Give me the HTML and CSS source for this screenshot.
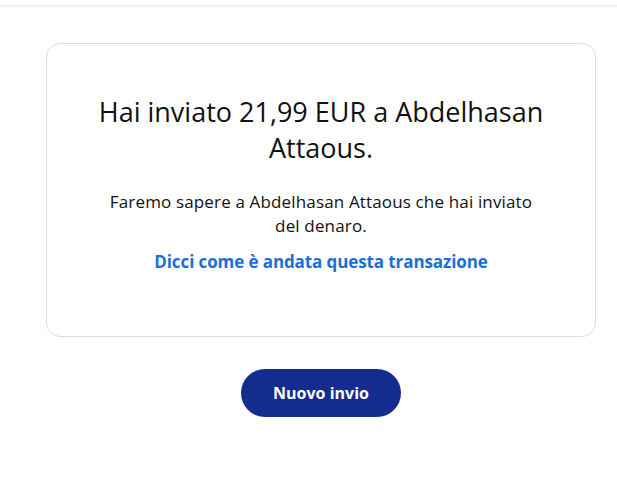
FILE: index.html
```html
<!DOCTYPE html>
<html lang="it">
<head>
<meta charset="utf-8">
<link rel="stylesheet" href="styles.css">
</head>
<body>
<div class="topbar"></div>
<main class="page">
  <section class="card">
    <h1 class="title">Hai inviato 21,99 EUR a Abdelhasan Attaous.</h1>
    <p class="info">Faremo sapere a Abdelhasan Attaous che hai inviato del denaro.</p>
    <a class="feedback" href="#">Dicci come è andata questa transazione</a>
  </section>
  <div class="actions">
    <button class="btn">Nuovo invio</button>
  </div>
</main>
</body>
</html>
```
FILE: styles.css
```css
* { box-sizing: border-box; }
html, body { margin: 0; background: #fff; }
body { font-family: "Open Sans", "Noto Sans", sans-serif; color: #111; }
.topbar {
  height: 6px;
  border-bottom: 1px solid #ececec;
  box-shadow: 0 1px 4px rgba(0,0,0,0.05);
}
.page {
  padding: 37px 0 0 46px;
  width: 596px;
}
.card {
  border: 1px solid #dcdcdc;
  border-radius: 14px;
  padding: 50px 40px 62px;
  text-align: center;
  display: flex;
  flex-direction: column;
  align-items: center;
}
.title {
  margin: 0;
  font-size: 27px;
  font-weight: 400;
  line-height: 36px;
  color: #111;
}
.info {
  margin: 24px 0 0;
  font-size: 17px;
  line-height: 24px;
  letter-spacing: 0.15px;
  max-width: 436px;
}
.feedback {
  margin-top: 12px;
  font-size: 17px;
  font-weight: 700;
  line-height: 24px;
  letter-spacing: -0.1px;
  color: #1b6fd6;
  text-decoration: none;
}
.actions {
  display: flex;
  justify-content: center;
  padding-top: 32px;
}
.btn {
  width: 160px;
  height: 48px;
  border: 0;
  border-radius: 24px;
  background: #142c8e;
  color: #fff;
  font-family: inherit;
  font-size: 16px;
  font-weight: 700;
}
```
